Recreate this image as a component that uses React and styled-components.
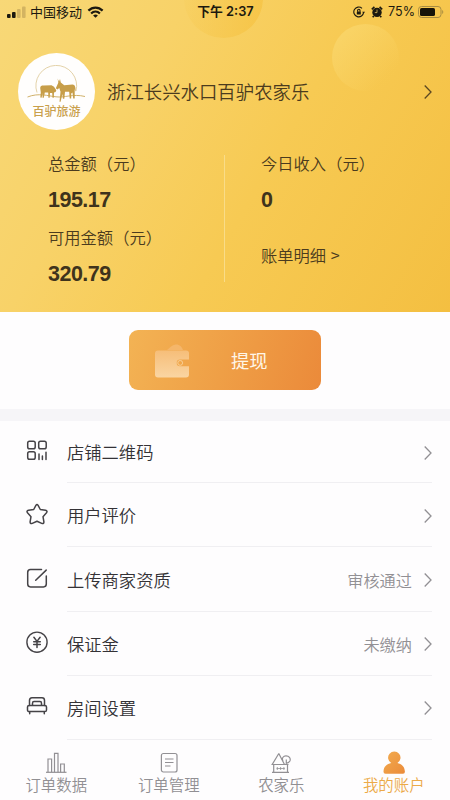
import React from "react";
import styled, { createGlobalStyle } from "styled-components";

const GlobalStyle = createGlobalStyle`
  * { box-sizing: border-box; }
  html, body { margin: 0; padding: 0; }
  body {
    width: 450px;
    height: 800px;
    overflow: hidden;
    background: #fefdfe;
    font-family: "Noto Sans CJK SC", sans-serif;
    color: #38363a;
  }
  svg { display: block; flex: none; }
`;

const Screen = styled.main`
  width: 450px;
  height: 800px;
  display: flex;
  flex-direction: column;
  overflow: hidden;
`;

const Hero = styled.header`
  position: relative;
  height: 312px;
  flex: none;
  overflow: hidden;
  background: linear-gradient(120deg, #f8d877 0%, #f8d268 30%, #f7ca53 58%, #f4bf41 100%);
`;

const Bubble = styled.div`
  position: absolute;
  border-radius: 50%;
  left: ${(p) => p.$x}px;
  top: ${(p) => p.$y}px;
  width: ${(p) => p.$size}px;
  height: ${(p) => p.$size}px;
  background: ${(p) => p.$fill};
`;

const StatusBar = styled.div`
  position: relative;
  height: 23px;
  padding: 0 6px 0 7px;
  display: grid;
  grid-template-columns: 1fr auto 1fr;
  align-items: center;
  color: #1c190f;
  font-size: 13px;
  line-height: 23px;
`;

const StatusSide = styled.div`
  display: flex;
  align-items: center;
  justify-content: ${(p) => (p.$end ? "flex-end" : "flex-start")};
`;

const Carrier = styled.span`
  margin: -1px 5px 0 4px;
  font-weight: 400;
`;

const Clock = styled.span`
  font-family: Inter, "Noto Sans CJK SC", sans-serif;
  font-weight: 600;
  font-size: 12.8px;
`;

const Percent = styled.span`
  margin: 0 3px 0 5px;
  font-family: Inter, sans-serif;
  font-weight: 400;
  font-size: 12.6px;
`;

const StatusIcon = styled.span`
  margin-left: 6px;
`;

const Profile = styled.div`
  position: relative;
  display: flex;
  align-items: center;
  margin-top: 30px;
  height: 77px;
  padding: 0 18px;
`;

const Avatar = styled.div`
  width: 77px;
  height: 77px;
  border-radius: 50%;
  background: #fffefd;
  display: flex;
  flex-direction: column;
  align-items: center;
  padding-top: 12px;
`;

const AvatarName = styled.span`
  font-size: 12px;
  line-height: 15px;
  font-weight: 500;
  color: #c9a04c;
`;

const ShopName = styled.h1`
  flex: 1;
  margin: -2px 0 0 12px;
  font-size: 18.4px;
  line-height: 28px;
  font-weight: 350;
  color: #4b3b1e;
`;

const Stats = styled.section`
  position: relative;
  display: flex;
  margin: 19px 0 0 48px;
`;

const StatColumn = styled.div`
  width: ${(p) => p.$width}px;
  height: 148px;
  padding-left: ${(p) => p.$inset}px;
  display: flex;
  flex-direction: column;
`;

const Separator = styled.div`
  width: 1px;
  height: 127px;
  margin-top: 6px;
  background: #f9dc88;
`;

const StatLabel = styled.div`
  height: 30px;
  line-height: 29px;
  font-size: 16.3px;
  font-weight: 350;
  color: #4b3b1e;
`;

const StatValue = styled.div`
  height: 44px;
  line-height: 42px;
  font-family: "Liberation Sans", sans-serif;
  font-size: 21.5px;
  letter-spacing: -0.5px;
  font-weight: 700;
  color: #3f331c;
`;

const BillLink = styled.div`
  margin-top: 17px;
  line-height: 30px;
  font-size: 16.3px;
  font-weight: 350;
  word-spacing: 1px;
  color: #4b3b1e;
`;

const ActionArea = styled.section`
  height: 96.5px;
  flex: none;
  display: flex;
  justify-content: center;
  padding-top: 18px;
`;

const WithdrawButton = styled.button`
  width: 192px;
  height: 60px;
  border: 0;
  border-radius: 9px;
  padding: 0 0 0 26px;
  display: flex;
  align-items: center;
  background: linear-gradient(107deg, #f3b354 0%, #ef9f46 50%, #eb8a3a 100%);
  color: #fff6e8;
  font-family: inherit;
  font-size: 18.3px;
  font-weight: 400;
`;

const ButtonText = styled.span`
  margin: -1px 0 0 41px;
  line-height: 28px;
`;

const Band = styled.div`
  height: 12.5px;
  flex: none;
  background: #f6f5f8;
`;

const MenuIcon = styled.span`
  width: 41px;
  padding-top: 19.5px;
`;

const MenuRow = styled.li`
  height: 64.1px;
  display: flex;

  &:first-child {
    height: 62.4px;
  }

  &:first-child ${MenuIcon} {
    padding-top: 18px;
  }
`;

const Menu = styled.ul`
  list-style: none;
  margin: 0;
  padding: 0 18px 0 26px;
  flex: none;
`;

const MenuBody = styled.div`
  flex: 1;
  display: flex;
  align-items: center;
  border-bottom: 1px solid #f0eff2;
  padding-top: 2px;
`;

const MenuLabel = styled.span`
  flex: 1;
  margin-top: -1px;
  font-size: 17.3px;
  line-height: 26px;
  font-weight: 350;
  color: #343236;
`;

const MenuNote = styled.span`
  margin: -1px 12px 0 0;
  font-size: 16.2px;
  line-height: 26px;
  font-weight: 350;
  color: #929094;
`;

const TabBar = styled.nav`
  flex: 1;
  display: grid;
  grid-template-columns: repeat(4, 1fr);
`;

const Tab = styled.div`
  display: flex;
  flex-direction: column;
  align-items: center;
  padding-top: 11.7px;
  color: ${(p) => (p.$active ? "#ecaa48" : "#918f93")};
  font-size: 15.4px;
  line-height: 22px;
  font-weight: 350;
`;

const TabText = styled.span`
  margin-top: -2px;
`;

const Signal = () => (
  <svg width="19" height="12" viewBox="0 0 19 12">
    <rect x="0" y="8" width="3.6" height="4" rx="1" fill="#1c190f" />
    <rect x="5" y="6" width="3.6" height="6" rx="1" fill="#1c190f" />
    <rect x="10" y="3" width="3.6" height="9" rx="1" fill="#d3b461" />
    <rect x="15" y="0.5" width="3.6" height="11.5" rx="1" fill="#d3b461" />
  </svg>
);

const Wifi = () => (
  <svg width="17" height="12" viewBox="0 0 16 12" fill="none" stroke="#1c190f" strokeWidth="2.2">
    <path d="M0.9 4.6C5 .5 11 .5 15.1 4.6" />
    <path d="M3.6 7.5C6.2 5 9.8 5 12.4 7.5" />
    <path d="M8 11.8 5.6 9.4C7 8.1 9 8.1 10.4 9.4Z" fill="#1c190f" stroke="none" />
  </svg>
);

const RotationLock = () => (
  <svg width="12" height="12" viewBox="0 0 12 12" fill="none" stroke="#1c190f" strokeWidth="1.1">
    <path d="M10.6 6.3A4.9 4.9 0 1 1 9 2.3" />
    <path d="M9.2 5.8h2.8l-1.4 1.9z" fill="#1c190f" stroke="none" />
    <path d="M4.6 5.8V4.5a1.2 1.2 0 0 1 2.4 0v1.3" />
    <rect x="3.8" y="5.4" width="4" height="3.1" rx=".5" fill="#1c190f" stroke="none" />
  </svg>
);

const Alarm = () => (
  <svg width="12" height="12" viewBox="0 0 12 12">
    <circle cx="6" cy="6.4" r="4.7" fill="#1c190f" />
    <path d="M.8 3.4 3.4.9M11.2 3.4 8.6.9M2.8 10 1.7 11.3M9.2 10l1.1 1.3" stroke="#1c190f" strokeWidth="1.6" />
    <path d="M6 3.6v3H3.8" fill="none" stroke="#f7d267" strokeWidth=".7" />
  </svg>
);

const Battery = () => (
  <svg width="26" height="12" viewBox="0 0 26 12">
    <rect x=".5" y=".5" width="22.5" height="11" rx="3" fill="none" stroke="#a88d42" />
    <rect x="2" y="2" width="15" height="8" rx="1.6" fill="#171409" />
    <path d="M24.2 4v4c1.4-.5 1.4-3.5 0-4z" fill="#a88d42" />
  </svg>
);

const DonkeyLogo = () => (
  <svg width="59" height="38" viewBox="0 0 59 38">
    <path d="M10 27.5A20.4 20.4 0 1 1 49 26" fill="none" stroke="#dcc793" strokeWidth=".8" />
    <path d="M0.500 32C12 27.500 21 31 29 31.800C37 33 46 28.500 58 31.500" fill="none" stroke="#cba85a" strokeWidth=".9" />
    <g fill="#c79e49">
      <path d="M13.300 32.500 13.800 27.500 13.200 23C13.300 21 14.500 20.600 16.500 20.600L24.500 20.300 27 21.800 29.300 25.300 28.600 27 27 27.600 26.800 32.800H25.500L25.200 28H23L22.700 32.800H21.400L21.200 27.500H17.800L16.800 32.800H15.500L15.700 28 14.600 32.800Z" />
      <path d="M30.600 13.500 32 16.800 33 14 33.800 17.600 37.200 20.200 45.500 19.500C48 19.700 48.500 21.300 48.700 26.700L47.700 24.300V33.500H46.200L45.500 27.600 44.200 28.600V33.500H42.700L42.200 26.700H38L37.300 33.800H35.900L35.400 29.100 33.600 36.800H32.500L33.500 26.700 32.300 23 30.400 24.400 28.800 23.200 31.300 17.800Z" />
    </g>
  </svg>
);

const Wallet = () => (
  <svg width="35" height="36" viewBox="0 0 35 36">
    <defs>
      <linearGradient id="walletFill" x1="0" y1="0" x2="0" y2="1">
        <stop offset="0" stopColor="#f6be79" />
        <stop offset="1" stopColor="#fad5a2" />
      </linearGradient>
    </defs>
    <path d="M12 8C15 5.500 17 3 20.500 2.500C24 2 27 4.500 28 8Z" fill="#f5b66a" />
    <path
      d="M3 8.500H31Q34 8.500 34 11V17.600H25A3.300 3.300 0 0 0 25 24.200H34V32.500Q34 35.500 31 35.500H3Q0 35.500 0 32.500V11.500Q0 8.500 3 8.500Z"
      fill="url(#walletFill)"
    />
    <circle cx="25.200" cy="20.900" r="2.400" fill="none" stroke="#f9cf96" strokeWidth="1" />
  </svg>
);

const Chevron = ({ color }) => (
  <svg width="8" height="14" viewBox="0 0 8 14" fill="none" stroke={color} strokeWidth="1.3">
    <path d="M.7.5 7 7 .7 13.500" />
  </svg>
);

const LineIcon = ({ children }) => (
  <svg
    width="22"
    height="24"
    viewBox="0 0 22 24"
    fill="none"
    stroke="#454347"
    strokeWidth="1.5"
    strokeLinecap="round"
    strokeLinejoin="round"
  >
    {children}
  </svg>
);

const menuItems = [
  {
    label: "店铺二维码",
    icon: (
      <>
        <rect x="1.7" y="2.2" width="7.5" height="7.5" rx="1.8" />
        <rect x="12.7" y="2.2" width="7.5" height="7.5" rx="1.8" />
        <rect x="1.7" y="12.8" width="7.5" height="7.5" rx="1.8" />
        <path d="M13 15v5.500M16.400 17v3.500M20 13.200v7.300" />
      </>
    ),
  },
  {
    label: "用户评价",
    icon: (
      <path d="M9.900 2.300Q11 .5 12.100 2.300L14.300 6.500 19.500 7.300Q21.900 7.900 20.500 9.800L17 13.700 17.900 18.800Q18 21.200 15.700 20.400L11 18.200 6.300 20.400Q4 21.200 4.100 18.800L5 13.700 1.500 9.800Q.1 7.900 2.500 7.300L7.700 6.500Z" />
    ),
  },
  {
    label: "上传商家资质",
    note: "审核通过",
    icon: (
      <>
        <path d="M15.500 2.600H4.500Q1.700 2.600 1.700 5.400V17.100Q1.700 19.900 4.500 19.900H17.500Q20.300 19.900 20.300 17.100V9" />
        <path d="M9.700 13.300 20.200 3.100" />
      </>
    ),
  },
  {
    label: "保证金",
    note: "未缴纳",
    icon: (
      <>
        <circle cx="11" cy="11.200" r="10.100" strokeWidth="1.400" />
        <path d="M7.900 6.300 11 10.400 14.100 6.300M11 10.400V16.400M7.700 10.700H14.300M7.700 13.400H14.300" />
      </>
    ),
  },
  {
    label: "房间设置",
    icon: (
      <>
        <path d="M3.500 10.500V5.500Q3.500 2.800 6 2.800H16Q18.500 2.800 18.500 5.500V10.500" />
        <path d="M6.500 10.200V8.200Q6.500 6.600 8 6.600H14Q15.500 6.600 15.500 8.200V10.200" />
        <rect x="1.500" y="10.400" width="19" height="6.200" rx="1.700" />
        <path d="M3.700 17V18.800M18.300 17V18.800" />
      </>
    ),
  },
];

const TabIcon = ({ children }) => (
  <svg width="24" height="24" viewBox="0 0 24 24" fill="none" stroke="#929094" strokeWidth="1.200">
    {children}
  </svg>
);

const tabs = [
  {
    label: "订单数据",
    icon: (
      <>
        <path d="M2 21.300H22.500" />
        <path d="M4 21.300V8H7.600V21.300M10.500 21.300V2.300H14V21.300M16.600 21.300V13H20.300V21.300" />
      </>
    ),
  },
  {
    label: "订单管理",
    icon: (
      <>
        <rect x="4.400" y="2.500" width="15.600" height="18.500" rx="2" />
        <path d="M8 8H16.500M8 11.500H16.500M8 15H13.500" />
      </>
    ),
  },
  {
    label: "农家乐",
    icon: (
      <>
        <path d="M9.800 2.500 3.200 13.500H19.500M9.800 2.500 15.500 13.500M4.700 13.500V21.300M18.500 13.500V21.300M3 21.300H20" />
        <path d="M13.900 10C12.500 7 14.500 4.700 17 4.800C20 4.900 22 7.200 20.900 10C20.200 11.500 19 12 17 12.300M17.300 8.500V13.500" />
        <path d="M8.300 16V19M11.600 16V19M14.900 16V19M7.500 17.500H15.800" strokeWidth=".8" />
      </>
    ),
  },
  {
    label: "我的账户",
    active: true,
    icon: (
      <>
        <defs>
          <linearGradient id="personFill" x1="0" y1="0" x2="1" y2="1">
            <stop offset="0" stopColor="#f2ac4f" />
            <stop offset="1" stopColor="#eb8b3a" />
          </linearGradient>
        </defs>
        <path
          d="M9.200 12.100A6.200 6.200 0 1 1 15.400 12.100C19.500 13 22.500 15.500 22.900 20.500Q23 22.800 21 22.800H3.500Q1.400 22.800 1.500 20.500C1.800 15.500 5 13 9.200 12.100Z"
          fill="url(#personFill)"
          stroke="none"
        />
      </>
    ),
  },
];

export default function App() {
  return (
    <Screen>
      <GlobalStyle />
      <Hero>
        <Bubble $x={184} $y={-41} $size={79} $fill="linear-gradient(100deg, rgba(247,205,86,.1), rgba(245,191,58,.6))" />
        <Bubble $x={332} $y={24} $size={67} $fill="linear-gradient(135deg, rgba(251,220,119,.65), rgba(247,202,80,.12) 80%)" />
        <StatusBar>
          <StatusSide>
            <Signal />
            <Carrier>中国移动</Carrier>
            <Wifi />
          </StatusSide>
          <Clock>下午 2:37</Clock>
          <StatusSide $end>
            <RotationLock />
            <StatusIcon>
              <Alarm />
            </StatusIcon>
            <Percent>75%</Percent>
            <Battery />
          </StatusSide>
        </StatusBar>
        <Profile>
          <Avatar>
            <DonkeyLogo />
            <AvatarName>百驴旅游</AvatarName>
          </Avatar>
          <ShopName>浙江长兴水口百驴农家乐</ShopName>
          <Chevron color="#5c4822" />
        </Profile>
        <Stats>
          <StatColumn $width={176} $inset={0}>
            <StatLabel>总金额（元）</StatLabel>
            <StatValue>195.17</StatValue>
            <StatLabel>可用金额（元）</StatLabel>
            <StatValue>320.79</StatValue>
          </StatColumn>
          <Separator />
          <StatColumn $width={200} $inset={36}>
            <StatLabel>今日收入（元）</StatLabel>
            <StatValue>0</StatValue>
            <BillLink>账单明细 &gt;</BillLink>
          </StatColumn>
        </Stats>
      </Hero>
      <ActionArea>
        <WithdrawButton>
          <Wallet />
          <ButtonText>提现</ButtonText>
        </WithdrawButton>
      </ActionArea>
      <Band />
      <Menu>
        {menuItems.map((item) => (
          <MenuRow key={item.label}>
            <MenuIcon>
              <LineIcon>{item.icon}</LineIcon>
            </MenuIcon>
            <MenuBody>
              <MenuLabel>{item.label}</MenuLabel>
              {item.note && <MenuNote>{item.note}</MenuNote>}
              <Chevron color="#929094" />
            </MenuBody>
          </MenuRow>
        ))}
      </Menu>
      <TabBar>
        {tabs.map((tab) => (
          <Tab key={tab.label} $active={tab.active}>
            <TabIcon>{tab.icon}</TabIcon>
            <TabText>{tab.label}</TabText>
          </Tab>
        ))}
      </TabBar>
    </Screen>
  );
}
